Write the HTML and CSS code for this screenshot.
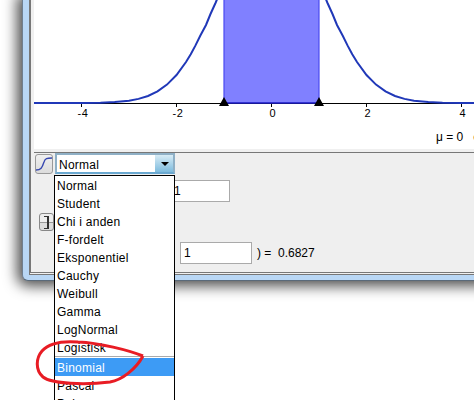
FILE: index.html
```html
<!DOCTYPE html>
<html lang="en">
<head>
    <meta charset="UTF-8">
    <title>Fordelinger</title>
    <link rel="stylesheet" href="styles.css">
</head>
<body>
    <div class="window">
        <div class="window-inner">
            <div class="plot">
                <svg class="plot-svg" width="440" height="149" viewBox="34 0 440 149">
                    <rect x="224" y="-1" width="95" height="104" fill="#8080ff"/>
                    <path d="M224 -1V103H319V-1" fill="none" stroke="#4a4af0" stroke-width="1.2"/>
                    <line x1="34" y1="103.5" x2="474" y2="103.5" stroke="#000"/>
                    <path d="M81.5 103v4M176.5 103v4M271.5 103v4M366.5 103v4M461.5 103v4" stroke="#000"/>
                    <polyline fill="none" stroke="#2038b8" stroke-width="2" points="34,103 81.5,103 100.5,102.7 114.75,102.1 129,100.7 138.5,98.9 148,96 157.5,91.4 167,84.6 176.5,75 186,62 190.75,54.2 195.5,45.4 200.25,35.8 206,25 210.5,14 215.5,3 218,-3"/>
                    <polyline fill="none" stroke="#2038b8" stroke-width="2" points="325,-3 327.5,3 332.5,14 337,25 342.75,35.8 347.5,45.4 352.25,54.2 357,62 366.5,75 376,84.6 385.5,91.4 395,96 404.5,98.9 414,100.7 428.25,102.1 442.5,102.7 461.5,103 474,103"/>
                    <path d="M224 103H319" stroke="#2020c8" stroke-width="1.4"/>
                    <path d="M219 106L224 97L229 106Z M314 106L319 97L324 106Z" fill="#000"/>
                </svg>
                <div class="axis-label" style="left:43.5px">-4</div>
                <div class="axis-label" style="left:138.5px">-2</div>
                <div class="axis-label" style="left:235.5px">0</div>
                <div class="axis-label" style="left:330.5px">2</div>
                <div class="axis-label" style="left:425.5px">4</div>
                <div class="params">μ = 0 &nbsp; σ</div>
            </div>
            <div class="controls">
                <div class="top-row">
                    <button class="icon-btn">
                        <svg width="16" height="18" viewBox="0 0 16 18"><path d="M0 15C5 15 6 13 8 7C9 3.500 11 3 16 3" fill="none" stroke="#3848b0" stroke-width="1.400"/></svg>
                    </button>
                    <div class="select">
                        <span class="select-text">Normal</span>
                        <span class="select-arrow"></span>
                    </div>
                </div>
                <div class="param-row">
                    <input class="field field-mean" value="1">
                </div>
                <div class="side-btn"><span class="bracket"></span></div>
                <div class="result-row">
                    <input class="field" value="1">
                    <span class="result-text">) = &nbsp;0.6827</span>
                </div>
            </div>
        </div>
    </div>

    <ul class="menu">
        <li>Normal</li>
        <li>Student</li>
        <li>Chi i anden</li>
        <li>F-fordelt</li>
        <li>Eksponentiel</li>
        <li>Cauchy</li>
        <li>Weibull</li>
        <li>Gamma</li>
        <li>LogNormal</li>
        <li>Logistisk</li>
        <li class="separator"></li>
        <li class="selected">Binomial</li>
        <li>Pascal</li>
        <li>Poisson</li>
    </ul>

    <svg class="scribble" width="120" height="60" viewBox="30 335 120 60">
        <path d="M143 356C128 350 100 343 78 342C65 341 50 342 42 351C36 358 35 370 43 377C52 384 85 385 110 382C122 380 136 369 143 356" fill="none" stroke="#e81c24" stroke-width="3"/>
    </svg>
</body>
</html>
```
FILE: styles.css
```css
html, body {
    margin: 0;
    padding: 0;
}

body {
    width: 474px;
    height: 400px;
    background: #fff;
    position: relative;
    overflow: hidden;
    font-family: "Liberation Sans", Arial, sans-serif;
    font-size: 12px;
    color: #000;
}

/* window frame, cut off by the top and right of the picture */
.window {
    width: 472px;
    height: 281px;
    margin-left: 22px;
    box-sizing: border-box;
    padding: 0 0 5px 6px;
    background: #b9d7f5;
    border-left: 1px solid #6f7f90;
    border-bottom: 1px solid #5a6a7a;
    border-radius: 0 0 0 6px;
    box-shadow: 0 0 14px 5px rgba(0, 0, 0, 0.7);
}

.window-inner {
    height: 100%;
    box-sizing: border-box;
    border-left: 2px solid #777;
    border-bottom: 3px double #777;
    padding-left: 3px;
    background: #f0f0f0;
    display: flex;
    flex-direction: column;
}

.plot {
    height: 149px;
    background: #fff;
    position: relative;
    flex: none;
}

.plot-svg {
    display: block;
}

.axis-label {
    position: absolute;
    top: 107px;
    font-size: 11px;
    letter-spacing: 0.5px;
}

.params {
    position: absolute;
    top: 130px;
    left: 402px;
    white-space: nowrap;
    font-size: 12px;
}

.controls {
    flex: 1;
    border-top: 1px solid #777;
    margin-top: 3px;
    padding-left: 1px;
    background: #efefef;
    position: relative;
}

.top-row {
    display: flex;
    gap: 2px;
}

.icon-btn {
    width: 18px;
    height: 20px;
    margin-top: 1px;
    padding: 0;
    box-sizing: border-box;
    border: 1px solid #999;
    border-radius: 3px;
    background: linear-gradient(#f0f0f0, #dcdcdc);
    display: flex;
    align-items: center;
    justify-content: center;
}

.select {
    width: 120px;
    height: 21px;
    box-sizing: border-box;
    border: 2px solid #8fb0c6;
    border-bottom-color: #6aa8d0;
    background: #fff;
    display: flex;
    align-items: center;
}

.select-text {
    flex: 1;
    padding: 2px 0 0 2px;
    font-size: 12px;
    letter-spacing: 0.25px;
}

.select-arrow {
    width: 18px;
    height: 100%;
    background: linear-gradient(#d8ecf6, #7dbbdd);
    position: relative;
}

.select-arrow::after {
    content: "";
    position: absolute;
    left: 6px;
    top: 7px;
    border: 4px solid transparent;
    border-top: 4px solid #000;
    border-bottom: 0;
}

.param-row {
    margin: 6px 0 0 135px;
}

.field {
    width: 72px;
    height: 22px;
    box-sizing: border-box;
    border: 1px solid #aaa;
    padding: 0 3px;
    font: 12px "Liberation Sans", Arial, sans-serif;
    background: #fff;
    display: block;
}

.field-mean {
    width: 60px;
}

.side-btn {
    position: absolute;
    left: 5px;
    top: 60px;
    width: 13px;
    height: 16px;
    border: 1px solid #888;
    border-radius: 3px;
    background: linear-gradient(#eee 50%, #999 50%, #999 56%, #ddd 56%);
}

.bracket {
    position: absolute;
    left: 4px;
    top: 2px;
    width: 3px;
    height: 11px;
    border: 1px solid #333;
    border-right-width: 2px;
    border-left: 0;
}

.result-row {
    display: flex;
    align-items: center;
    gap: 5px;
    margin: 40px 0 0 145px;
}

.result-text {
    white-space: nowrap;
}

.menu {
    position: absolute;
    left: 54px;
    top: 175px;
    width: 119px;
    height: 240px;
    margin: 0;
    padding: 0;
    list-style: none;
    background: #fff;
    border: 1px solid #000;
    overflow: hidden;
}

.menu li {
    height: 18px;
    line-height: 20px;
    padding-left: 2px;
    font-size: 12px;
    letter-spacing: 0.25px;
}

.menu .separator {
    height: 1px;
    padding: 0;
    margin-bottom: 1px;
    background: #aaa;
}

.menu .selected {
    background: #3d9bf5;
    color: #fff;
}

.scribble {
    position: absolute;
    left: 30px;
    top: 335px;
}
```
